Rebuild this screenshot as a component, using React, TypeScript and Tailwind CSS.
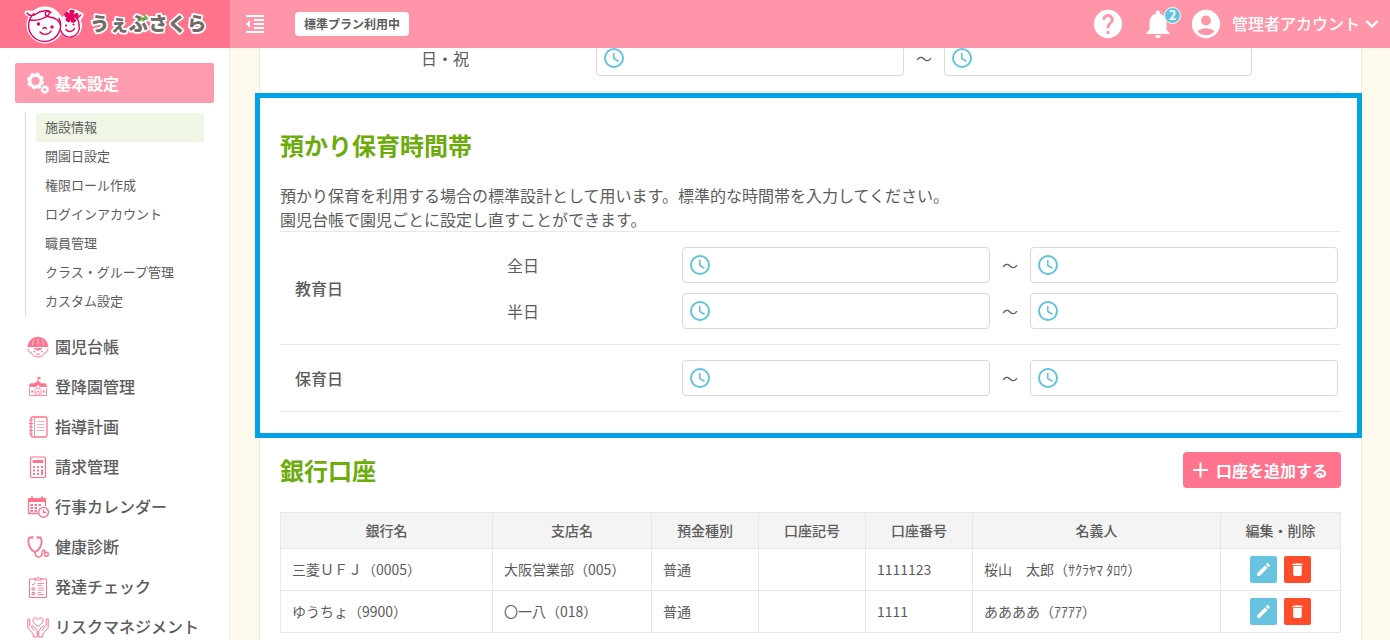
import React, { useState } from 'react';
import {
  MdAccountCircle,
  MdDelete,
  MdEdit,
  MdFormatIndentDecrease,
  MdHelp,
  MdNotifications,
} from 'react-icons/md';

const Logo = () => (
  <svg viewBox="0 0 230 48" className="h-12 w-[230px]" role="img" aria-label="うぇぶさくら">
    <g stroke="#fff" strokeWidth="5" fill="#fff" strokeLinejoin="round">
      <circle cx="45" cy="25" r="16" />
      <circle cx="70" cy="26" r="9.5" />
      <path d="M27 13q5 3 9 1l8 0zM68 14l3-3 4 1 6 3-2 4z" />
    </g>
    <g fill="none" stroke="#e4005f" strokeWidth="1.4" strokeLinecap="round">
      <path d="M34 13.500a16 16 0 1 0 25 5" />
      <path d="M60.500 30a9.500 9.500 0 0 0 18.500-5c0-4-1-6-3-8" />
      <path d="M27 13c2 3 6 3.500 9 1 5-4 13-4 15-1.500M80.500 15c-1 2-2 3-4 3" />
      <path d="M29.500 20c7 1 15-1 19-5 2-2.500 0-5-2-3.500-2.500 2-1 5 3 5.500 6 .8 10 3 11 8.500" />
      <path d="M40 32c3 3.500 9 3 11-1M43 28.500q1.500-2 3.500 0M66 29.500c2 3 7 2.500 8.500-1" />
    </g>
    <g fill="#e4005f">
      <circle cx="38.500" cy="24" r="1.700" />
      <circle cx="52" cy="27" r="1.700" />
      <circle cx="66" cy="25.500" r="1.100" />
      <circle cx="73.500" cy="24.500" r="1.100" />
      <path
        d="M71.500 16l-1.500-5 2-.6 2 .8zM71.500 16l5.500-2.500 1 2-1 2zM71.500 16l4 4.500-2 1.500-2-.3zM71.500 16l-2.500 5.500-2.200-1-.5-2zM71.500 16l-6 .3-.3-2.300 1.500-1.500z"
        stroke="#e4005f"
        strokeWidth="1.600"
        strokeLinejoin="round"
      />
    </g>
    <text
      x="90"
      y="31"
      fontSize="19.400"
      fill="#726b68"
      stroke="#fff"
      strokeWidth="3.500"
      strokeLinejoin="round"
      className="font-black [paint-order:stroke]"
    >
      うぇぶさくら
    </text>
    <path d="M141 17.500l2 3M144.500 15.500l2 3" stroke="#6fba2c" strokeWidth="2.200" strokeLinecap="round" />
  </svg>
);

const GearsIcon = () => (
  <svg viewBox="0 0 22 22" className="size-[22px]" fill="none" stroke="currentColor">
    <circle cx="8.500" cy="9" r="5.700" strokeWidth="3" />
    <circle cx="8.500" cy="9" r="7.500" strokeWidth="2" strokeDasharray="3.900 1.990" />
    <circle cx="17.800" cy="17.500" r="2.500" strokeWidth="1.800" />
    <circle cx="17.800" cy="17.500" r="3.600" strokeWidth="1.200" strokeDasharray="1.800 1.030" />
  </svg>
);

const ClockIcon = () => (
  <svg viewBox="0 0 24 24" className="size-6 shrink-0 text-[#62c3df]" fill="none" stroke="currentColor">
    <circle cx="12" cy="12" r="9" strokeWidth="2" />
    <path d="M11.800 7v5.500l4.700 2.700" strokeWidth="1.600" />
  </svg>
);

const PlusIcon = () => (
  <svg viewBox="0 0 24 24" className="size-6 shrink-0" fill="none" stroke="currentColor" strokeWidth="2">
    <path d="M12.500 4.500v15M5 12h15" />
  </svg>
);

const ChevronIcon = () => (
  <svg viewBox="0 0 24 24" className="size-6 shrink-0" fill="none" stroke="currentColor" strokeWidth="2.300">
    <path d="M6.500 9l5.500 5.500L17.500 9" />
  </svg>
);

const ChildIcon = () => (
  <>
    <path d="M1.500 10C2 4 6 1.500 11 1.500S20 4 20.500 10z" fill="currentColor" />
    <path d="M11 .5v2" />
    <path d="M7 3.500c-1 2-1.500 4-1.500 6M11 2.500v7M15 3.500c1 2 1.500 4 1.500 6" stroke="#fff" strokeWidth=".6" />
    <path d="M.5 10.500h21" />
    <path d="M2 12.500c-1.500 1-1 3.500 1.500 3.500C5 19.500 8 21 11 21s6-1.500 7.500-5c2.500 0 3-2.500 1.500-3.500" />
    <path d="M7 12.500h8l-4 2z" fill="currentColor" strokeWidth=".6" />
    <path d="M6.500 15.500H8M14 15.500h1.500" strokeWidth="1.500" />
    <path d="M9 17.800q2 1.200 4 0" />
  </>
);

const SchoolIcon = () => (
  <>
    <path d="M11 5V.8l2.500 1.400L11 3" />
    <path d="M2 10.500l1.500-2.800h4L11 5l3.500 2.700h4l1.500 2.800z" fill="currentColor" strokeWidth=".8" />
    <path d="M2.500 12v7M19.500 12v7M2 19.500h18M8 13v6M14 13v6" strokeWidth=".8" />
    <circle cx="11" cy="10.800" r="2" fill="#fff" strokeWidth=".8" />
    <path d="M9.800 19v-3.500h2.400V19" strokeWidth=".7" />
    <path d="M4.300 15.500h2M15.700 15.500h2" strokeWidth="1.800" />
  </>
);

const NotebookIcon = () => (
  <>
    <rect x="4" y="1" width="16" height="20" rx="1.500" strokeWidth="1.300" />
    <path d="M7.500 1v20" strokeWidth=".8" />
    <path d="M2 4h4M2 7.500h4M2 11h4M2 14.500h4M2 18h4" strokeWidth="1.200" />
    <path d="M10 5.500h7.500M10 8.500h7.500M10 11.500h7.500M10 14.500h7.500" strokeWidth=".6" />
  </>
);

const CalculatorIcon = () => (
  <>
    <rect x="3.500" y="1" width="15" height="20.500" rx="1.200" strokeWidth="1.200" />
    <path d="M6 4.500h10v2H6z" fill="currentColor" />
    <path
      d="M6 11h2M10 11h2M14 11h2M6 14.500h2M10 14.500h2M14 14.500h2M6 18h2M10 18h2M15 14v5"
      strokeWidth="1.900"
    />
  </>
);

const CalendarIcon = () => (
  <>
    <path d="M11.500 17.500H1.500V3h17v7" strokeWidth="1.300" />
    <path d="M1.500 3h17v2.500h-17z" fill="currentColor" />
    <path d="M5 .5v3M15 .5v3" strokeWidth="2" />
    <path d="M3.500 9h2.500M7.500 9H10M11.500 9H14M3.500 12h2.500M7.500 12H10M3.500 15h2.500M7.500 15H10" strokeWidth="2" />
    <circle cx="16.500" cy="16.300" r="4.900" strokeWidth="1.400" fill="#fff" />
    <path d="M16.500 13.500v3h2.500" strokeWidth="1.300" />
  </>
);

const StethoscopeIcon = () => (
  <>
    <path d="M5 1.500H2.500C0 5 2 13.500 8 16c6-2.500 8-11 5.500-14.500H11" strokeWidth="1.800" />
    <path d="M5.500 .3v2.500M10.500 .3v2.500" strokeWidth="1.500" />
    <path d="M8 16c0 6.500 7 6.500 7 1.500 0-4 2-4.500 3-1.500" strokeWidth="1.500" />
    <circle cx="19.300" cy="18.300" r="2" strokeWidth="1.400" />
  </>
);

const ClipboardIcon = () => (
  <>
    <path d="M7.500 3H2.500v18.500h17V3h-5M7.500 4V2.500H9.500q1.500-2.500 3 0h2V4z" />
    <path d="M5 8l1.200 1.200L8 6.800M5 12h2.500v2H5zM5 16.500h2.500v2H5z" />
    <path d="M10.500 7.500h6.500M10.500 9.500H15M10.500 12h6.500M10.500 14h6.500M10.500 16.500h4M10.500 18.500h6.500" strokeWidth=".8" />
  </>
);

const HandsIcon = () => (
  <>
    <path d="M11 10.500C7.500 8 6 6.200 6 4.300c0-2.800 3.500-3.300 5-.8 1.500-2.500 5-2 5 .8 0 1.900-1.500 3.700-5 6.200z" />
    <path d="M.8 3v9l5.500 6v3h4v-5c0-2-4-6.500-5.500-6-.8.500 0 1.500 2.200 4.500M2.800 10.500V3.500Q1.800 2 .8 3" />
    <path d="M21.200 3v9l-5.500 6v3h-4v-5c0-2 4-6.500 5.500-6 .8.500 0 1.500-2.200 4.500M19.200 10.500V3.500q1-1.500 2-.5" />
  </>
);

const subMenu = [
  '施設情報',
  '開園日設定',
  '権限ロール作成',
  'ログインアカウント',
  '職員管理',
  'クラス・グループ管理',
  'カスタム設定',
];

const mainMenu = [
  { label: '園児台帳', Icon: ChildIcon },
  { label: '登降園管理', Icon: SchoolIcon },
  { label: '指導計画', Icon: NotebookIcon },
  { label: '請求管理', Icon: CalculatorIcon },
  { label: '行事カレンダー', Icon: CalendarIcon },
  { label: '健康診断', Icon: StethoscopeIcon },
  { label: '発達チェック', Icon: ClipboardIcon },
  { label: 'リスクマネジメント', Icon: HandsIcon },
];

const accounts = [
  {
    bank: '三菱ＵＦＪ（0005）',
    branch: '大阪営業部（005）',
    type: '普通',
    code: '',
    number: '1111123',
    holder: '桜山　太郎（ｻｸﾗﾔﾏ ﾀﾛｳ）',
  },
  {
    bank: 'ゆうちょ（9900）',
    branch: '〇一八（018）',
    type: '普通',
    code: '',
    number: '1111',
    holder: 'ああああ（ｱｱｱｱ）',
  },
];

const columns = [
  { label: '銀行名', width: 'w-[212px]' },
  { label: '支店名', width: 'w-[159px]' },
  { label: '預金種別', width: 'w-[107px]' },
  { label: '口座記号', width: 'w-[107px]' },
  { label: '口座番号', width: 'w-[107px]' },
  { label: '名義人', width: '' },
  { label: '編集・削除', width: 'w-[120px]' },
];

const TimeInput: React.FC<{ label: string }> = ({ label }) => {
  const [value, setValue] = useState('');

  return (
    <label className="flex h-9 min-w-0 flex-1 items-center rounded border border-[#d9d9d9] bg-white px-[5px]">
      <ClockIcon />
      <input
        type="text"
        aria-label={label}
        value={value}
        onChange={(e) => setValue(e.target.value)}
        className="min-w-0 flex-1 px-2 outline-none"
      />
    </label>
  );
};

const TimeRange: React.FC<{ label: string; name: string }> = ({ label, name }) => (
  <div className="flex items-center">
    <span className="w-[175px] shrink-0">{label}</span>
    <TimeInput label={`${name} 開始`} />
    <span className="w-10 shrink-0 text-center">～</span>
    <TimeInput label={`${name} 終了`} />
  </div>
);

const Header = () => (
  <header className="relative z-10 flex h-12 shrink-0 items-center bg-[#ff95a8] text-white">
    <a href="#" className="h-12 w-[230px] shrink-0 bg-[#ff738c]">
      <Logo />
    </a>
    <button type="button" aria-label="メニューを閉じる" className="ml-[13px]">
      <MdFormatIndentDecrease className="size-6" />
    </button>
    <span className="ml-7 rounded bg-white px-[9px] text-xs leading-6 font-bold text-[#5c5c5c]">標準プラン利用中</span>
    <div className="ml-auto flex items-center">
      <button type="button" aria-label="ヘルプ">
        <MdHelp className="size-[34px]" />
      </button>
      <button type="button" aria-label="お知らせ" className="relative ml-4">
        <MdNotifications className="size-[34px]" />
        <span className="absolute top-0 right-[-6px] flex size-[17px] items-center justify-center rounded-full border border-white bg-[#62c3df] pb-px text-[13px] leading-3 font-bold">
          2
        </span>
      </button>
      <button type="button" className="ml-[14px] flex items-center pr-[6px] font-medium">
        <MdAccountCircle className="mr-[9px] size-[34px]" />
        <span className="pb-0.5">管理者アカウント</span>
        <ChevronIcon />
      </button>
    </div>
  </header>
);

const Sidebar = () => (
  <aside className="w-[230px] shrink-0 overflow-hidden border-r border-[#ececec] bg-white pt-[15px] pl-[15px]">
    <button
      type="button"
      className="flex h-10 w-[199px] items-center gap-[6px] rounded-xs bg-[#ff9bae] pl-3 font-bold text-white"
    >
      <GearsIcon />
      基本設定
    </button>
    <ul className="mt-[10px] mr-[25px] mb-[11px] ml-[10px] border-l border-[#d9d9d9] pl-[10px] text-[13px] leading-[27px]">
      {subMenu.map((label, i) => (
        <li key={label}>
          <a href="#" className={`block rounded-xs pb-0.5 pl-[9px] ${i === 0 ? 'bg-[#eff6e6]' : ''}`}>
            {label}
          </a>
        </li>
      ))}
    </ul>
    <ul className="font-medium">
      {mainMenu.map(({ label, Icon }) => (
        <li key={label}>
          <a href="#" className="flex h-10 items-center gap-[6px] pl-3 whitespace-nowrap">
            <svg
              viewBox="0 0 22 22"
              className="size-[22px] shrink-0 text-[#ff738c]"
              fill="none"
              stroke="currentColor"
              strokeWidth="1"
            >
              <Icon />
            </svg>
            <span className="pb-0.5">{label}</span>
          </a>
        </li>
      ))}
    </ul>
  </aside>
);

const BankAccounts = () => (
  <section className="px-5 pt-[14px]">
    <div className="flex items-center justify-between">
      <h2 className="text-2xl leading-9 font-bold text-[#6cab0c]">銀行口座</h2>
      <button
        type="button"
        className="flex h-9 items-center gap-1 rounded bg-[#ff738c] pr-[13px] pl-[5px] font-bold text-white"
      >
        <PlusIcon />
        口座を追加する
      </button>
    </div>
    <table className="mt-6 w-full table-fixed border-collapse text-sm">
      <thead>
        <tr className="h-9 bg-[#f4f4f4]">
          {columns.map(({ label, width }) => (
            <th key={label} className={`border border-[#e8e8e8] pb-0.5 font-medium ${width}`}>
              {label}
            </th>
          ))}
        </tr>
      </thead>
      <tbody>
        {accounts.map((account) => (
          <tr key={account.bank} className="h-[42px]">
            {Object.entries(account).map(([key, value]) => (
              <td key={key} className="border border-[#e8e8e8] px-[11px] pb-0.5">
                {value}
              </td>
            ))}
            <td className="border border-[#e8e8e8]">
              <div className="flex justify-center gap-[7px] text-white">
                <button
                  type="button"
                  aria-label="編集"
                  className="flex size-[27px] items-center justify-center rounded-xs bg-[#67c3df]"
                >
                  <MdEdit className="size-[17px]" />
                </button>
                <button
                  type="button"
                  aria-label="削除"
                  className="flex size-[27px] items-center justify-center rounded-xs bg-[#ff4c2b]"
                >
                  <MdDelete className="size-[17px]" />
                </button>
              </div>
            </td>
          </tr>
        ))}
      </tbody>
    </table>
  </section>
);

export default function App() {
  return (
    <div className="flex h-screen flex-col overflow-hidden bg-[#fffaed] font-['Noto_Sans_CJK_JP',sans-serif] text-base text-[#5c5c5c]">
      <Header />
      <div className="flex min-h-0 flex-1">
        <Sidebar />
        <main className="mr-7 ml-[29px] min-w-0 flex-1 border-x border-[#ececec] bg-white">
          {/* last row of the weekday table, partly scrolled under the header */}
          <div className="mx-5 -mt-2 mb-px border-b border-[#e8e8e8] pr-[89px] pb-[15px] pl-[141px]">
            <TimeRange label="日・祝" name="日・祝" />
          </div>

          <section className="-mr-px -ml-[5px] border-[5px] border-[#00a2e8] pt-[29px] pr-4 pb-[21px] pl-5">
            <h2 className="text-2xl leading-9 font-bold text-[#6cab0c]">預かり保育時間帯</h2>
            <p className="mt-5 leading-6">
              預かり保育を利用する場合の標準設計として用います。標準的な時間帯を入力してください。
              <br />
              園児台帳で園児ごとに設定し直すことができます。
            </p>
            <div className="border-b border-[#e8e8e8]">
              <div className="flex items-center border-t border-[#e8e8e8] py-[15px] pr-[3px] pl-[15px]">
                <h3 className="w-[212px] shrink-0 font-medium">教育日</h3>
                <div className="flex min-w-0 flex-1 flex-col gap-[10px]">
                  <TimeRange label="全日" name="教育日 全日" />
                  <TimeRange label="半日" name="教育日 半日" />
                </div>
              </div>
              <div className="flex items-center border-t border-[#e8e8e8] py-[15px] pr-[3px] pl-[15px]">
                <h3 className="w-[212px] shrink-0 font-medium">保育日</h3>
                <div className="min-w-0 flex-1">
                  <TimeRange label="" name="保育日" />
                </div>
              </div>
            </div>
          </section>

          <BankAccounts />
        </main>
      </div>
    </div>
  );
}
